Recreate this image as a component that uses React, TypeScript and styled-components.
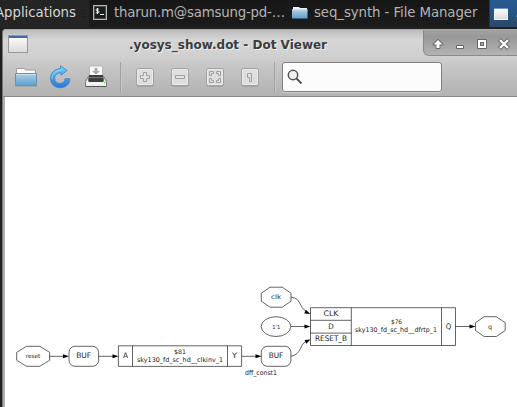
import React from "react";
import styled, { createGlobalStyle } from "styled-components";

const Global = createGlobalStyle`
  * { box-sizing: border-box; }
  body { margin: 0; overflow: hidden; background: #1b1b1b; font-family: "DejaVu Sans", sans-serif; }
`;

const Desktop = styled.div`
  width: 517px;
  height: 407px;
  display: flex;
  flex-direction: column;
  overflow: hidden;
  background: #202020;
`;

const Taskbar = styled.header`
  height: 28px;
  flex: none;
  display: flex;
  background: #242424;
  color: #b4b4b4;
  font-size: 13.33px;
  line-height: 25px;
  white-space: nowrap;
`;

const AppsMenu = styled.div`
  width: 89px;
  flex: none;
  display: flex;
  justify-content: space-between;
  color: #d6d6d6;
  svg { flex: none; margin-right: 3px; }
`;

const AppsLabel = styled.span`
  margin-left: -5px;
  letter-spacing: -0.04px;
`;

const Task = styled.div<{ $width: number; $active?: boolean }>`
  width: ${(p) => p.$width}px;
  height: 27px;
  flex: none;
  display: flex;
  overflow: hidden;
  border-left: 1px solid ${(p) => (p.$active ? "#123963" : "#1c1c1c")};
  background: ${(p) => (p.$active ? "linear-gradient(#28598f, #275587 50%, #2c4665)" : "linear-gradient(#161616, #1c1c1c)")};
  svg { flex: none; }
`;

const TaskFrame = styled.span`
  display: flex;
  margin-left: 1px;
`;

const ActiveIcon = styled.span`
  display: flex;
  align-items: flex-start;
  padding-top: 8px;
  margin-left: 4px;
`;

const TaskText = styled.span<{ $gap: number; $spacing?: number }>`
  margin-left: ${(p) => p.$gap}px;
  letter-spacing: ${(p) => p.$spacing ?? 0}px;
`;

const Window = styled.main`
  flex: 1;
  margin-left: 2px;
  margin-top: 1px;
  border-left: 1px solid #777;
  border-radius: 4px 0 0 0;
  display: flex;
  flex-direction: column;
  overflow: hidden;
  background: #b5b5b5;
`;

const Chrome = styled.div`
  height: 68px;
  flex: none;
  border-top: 1px solid #ababab;
  border-bottom: 1px solid #868686;
  background: linear-gradient(#bcbcbc, #d6d6d6 10px, #d0d0d0 26px, #c8c8c8 34px, #b2b2b2);
`;

const TitleBar = styled.div`
  height: 27px;
  display: flex;
`;

const WindowIconSlot = styled.div`
  width: 126px;
  flex: none;
  padding: 5px 0 0 5px;
  svg { display: block; }
`;

const Title = styled.h1`
  margin: 0;
  width: 294px;
  flex: none;
  font-size: 12px;
  line-height: 30px;
  font-weight: bold;
  color: #3c3c3c;
  text-shadow: 1px 1px 0 #eeeeee;
  white-space: nowrap;
`;

const Controls = styled.div`
  width: 94px;
  height: 26px;
  flex: none;
  border-left: 1px solid #888;
  border-bottom: 1px solid #8b8b8b;
  border-bottom-left-radius: 6px;
  background: linear-gradient(#a2a2a2, #989898 7px, #b4b4b4);
  svg { display: block; }
`;

const Toolbar = styled.div`
  display: flex;
  padding: 5px 0 0 11px;
`;

const ToolGroup = styled.div<{ $gap: number; $left?: number }>`
  display: flex;
  align-items: center;
  height: 30px;
  gap: ${(p) => p.$gap}px;
  margin-left: ${(p) => p.$left ?? 0}px;
  svg { display: block; }
`;

const Divider = styled.i<{ $left: number }>`
  width: 1px;
  height: 30px;
  margin-left: ${(p) => p.$left}px;
  background: #a0a0a0;
  box-shadow: 1px 0 #c8c8c8;
`;

const Search = styled.div`
  width: 160px;
  height: 30px;
  margin-left: 7px;
  border: 1px solid #808080;
  border-radius: 3px;
  background: #fcfcfc;
  box-shadow: 0 1px #cacaca;
  svg { display: block; }
`;

const Canvas = styled.section`
  flex: 1;
  border-left: 2px solid #b0b0b0;
  background: #fff;
  svg { display: block; }
`;

const Folder = () => (
  <svg width="24" height="24" viewBox="0 0 24 24">
    <defs>
      <linearGradient id="folderFront" x2="0" y2="1">
        <stop stopColor="#acd0e6" />
        <stop offset="1" stopColor="#5f9fcb" />
      </linearGradient>
    </defs>
    <path d="M2.500 5V3.500h7.800L11.500 5h10v5h-19z" fill="#fafafa" stroke="#a0a0a0" />
    <path d="M1.500 8.500h21v12h-21z" fill="url(#folderFront)" stroke="#6893af" />
    <path d="M2 9.500h20" stroke="#c7e0ee" />
    <path d="M1 21.500h22" stroke="#999" opacity=".6" />
  </svg>
);

const TaskFolder = () => (
  <svg width="18" height="25" viewBox="0 0 18 25">
    <path d="M2 8V7h6l1 1h7v4H2z" fill="#eef1f3" />
    <path d="M1 9.500h15.500v9H1z" fill="url(#folderFront)" />
    <path d="M1 10h15.500" stroke="#c3dfef" />
  </svg>
);

const TerminalIcon = () => (
  <svg width="18" height="25" viewBox="-1 0 18 25">
    <rect x="1.500" y="5.500" width="13" height="14" fill="#171d1d" stroke="#b5b8b5" />
    <rect x="2.500" y="6.500" width="11" height="12" fill="none" stroke="#474b4b" />
    <path d="M6.800 9H5q-1 0-1 .9t1 .9h1q1 0 1 1t-1 1H3.800M5.500 8v6" fill="none" stroke="#eee" />
    <path d="M8 14.500h4" stroke="#fff" />
  </svg>
);

const WindowIcon = ({ width, height }: { width: number; height: number }) => (
  <svg width={width} height={height} viewBox="0 0 20 18" preserveAspectRatio="none">
    <defs>
      <linearGradient id="windowPage" x2="0" y2="1">
        <stop stopColor="#fff" />
        <stop offset="1" stopColor="#d9dbd6" />
      </linearGradient>
    </defs>
    <rect x=".5" y=".5" width="19" height="17" fill="url(#windowPage)" stroke="#95979a" />
    <path d="M1 2h18" stroke="#4269a6" strokeWidth="2" />
  </svg>
);

const ActiveWindowIcon = () => (
  <svg width="14" height="12" viewBox="0 0 14 12">
    <rect x=".5" y=".5" width="13" height="11" fill="url(#windowPage)" stroke="#f2f2f0" />
    <path d="M0 .5h14" stroke="#6b93cd" />
  </svg>
);

const RefreshIcon = () => (
  <svg width="24" height="24" viewBox="0 0 24 24">
    <defs>
      <linearGradient id="refreshBlue" x2="0" y2="1">
        <stop stopColor="#75d3fa" />
        <stop offset="1" stopColor="#2874d6" />
      </linearGradient>
    </defs>
    <path
      d="M11.500 .8l6.500 4.700-6 4.700V7.700c-4.400.3-6.300 2.900-6.300 5.800 0 3 2.400 5 5.300 5 3 0 5-2 5-4.800h4.800c.2 5.200-4 9-9.600 9C5.700 22.700 1.500 19 1.500 13.500c0-5.400 4-9.400 10-10z"
      fill="url(#refreshBlue)" stroke="#3482ca" strokeWidth=".8"
    />
    <path d="M3 14c0-5 3-8.500 9.500-9" fill="none" stroke="#9de4ff" opacity=".7" />
  </svg>
);

const PrinterIcon = () => (
  <svg width="24" height="24" viewBox="0 0 24 24">
    <path d="M5 10.500h14l3.500 6v5h-21v-5z" fill="#ededed" stroke="#777" />
    <rect x="5.500" y="1" width="13" height="11" fill="#f8f8f8" stroke="#b8b8b8" />
    <path d="M10.500 3h3v3h2.500l-4 3.800L8 6h2.500z" fill="#aaa" />
    <path d="M5 10h14v2.500h.7V16q0 1-1 1H5.300q-1 0-1-1v-3.500H5z" fill="#3d3f3d" />
    <path d="M5 12.500h14" stroke="#777" />
    <path d="M2 18.500h20" stroke="#fff" />
    <path d="M2 21.500h20" stroke="#555" />
    <path d="M20 17.500h1.500" stroke="#62e044" strokeWidth="1.500" />
  </svg>
);

const toolGlyphs = {
  plus: "M7.500 4.500h3v3h3v3h-3v3h-3v-3h-3v-3h3z",
  minus: "M4.500 7.500h9v3h-9z",
  fit: "M3.500 3.500h4v2h-2v2h-2zM10.500 3.500h4v4h-2v-2h-2zM3.500 10.500h2v2h2v2h-4zM12.500 10.500h2v4h-4v-2h2z",
  one: "M6.500 5.500h4v8h-2v-4h-2z",
};

const ToolIcon = ({ glyph }: { glyph: keyof typeof toolGlyphs }) => (
  <svg width="18" height="30" viewBox="0 -6 18 30">
    <rect x=".5" y="1.500" width="17" height="17" rx="2" fill="none" stroke="#777" opacity=".35" />
    <rect x=".5" y=".5" width="17" height="17" rx="2" fill="#dedede" stroke="#a0a0a0" />
    <rect x="1.500" y="1.500" width="15" height="15" rx="1" fill="none" stroke="#ececec" />
    <path d={toolGlyphs[glyph]} fill="#e2e2e2" stroke="#a0a0a0" />
  </svg>
);

const SearchIcon = () => (
  <svg width="26" height="28" viewBox="0 0 26 28">
    <circle cx="10" cy="12" r="4.700" fill="#f2f2f2" stroke="#555" strokeWidth="1.500" />
    <path d="M13.500 15.500l5 5" stroke="#555" strokeWidth="2" />
  </svg>
);

const ControlIcons = () => (
  <svg width="93" height="25" viewBox="0 0 93 25">
    <g fill="#fff" stroke="#686868" strokeLinejoin="round" paintOrder="stroke">
      <path d="M14 10l4.500 4.500H15.500V18h-3v-3.500H9.500z" strokeWidth="1.800" />
      <path d="M33 16h6v2h-6z" strokeWidth="2" />
      <path d="M54 10h8v8h-8zM56 12v4h4v-4z" fillRule="evenodd" strokeWidth="2" />
    </g>
    <path d="M75.500 9.500l9 9M84.500 9.500l-9 9" stroke="#686868" strokeWidth="4.200" />
    <path d="M76 10l8 8M84 10l-8 8" stroke="#fff" strokeWidth="2.200" />
  </svg>
);

type LabelProps = { x: number; y: number; width: number; size?: number; children: string };
const Label = ({ x, y, width, size = 7.6, children }: LabelProps) => (
  <text x={x} y={y} fontSize={size} textAnchor="middle" textLength={width} lengthAdjust="spacingAndGlyphs">
    {children}
  </text>
);

const wires = [
  "M49.500 356.300H64",
  "M98.500 356.300H113",
  "M242 356.300H256",
  "M291 326.500H305",
  "M455.500 326.500H470",
  "M291 297.200C301 298 299 307 306 311.300",
  "M291 356.300C302 354 299 345 306 341.500",
];

const arrows = [
  "M69 356.300l-6-2v4z",
  "M118.500 356.300l-6-2v4z",
  "M261.500 356.300l-6-2v4z",
  "M310.500 326.500l-6-2v4z",
  "M475.500 326.500l-6-2v4z",
  "M310.500 314l-6.200-.6 1.500-3.700z",
  "M310.500 339.500l-4.200 4.200-1.800-3.700z",
];

const Circuit = () => (
  <svg width="512" height="310" viewBox="5 97 512 310" fontFamily="DejaVu Sans, sans-serif" fill="#222">
    <g fill="none" stroke="#303030" strokeWidth=".75">
      <path d="M26.500 346.300h13.300l9.800 6v8l-9.800 6H26.500l-9.800-6v-8z" />
      <rect x="69" y="346.300" width="29.600" height="20" rx="6" />
      <path d="M118.400 345.800h123.200v20.600H118.400zM132.500 345.800v20.600M227.500 345.800v20.600" />
      <path d="M270 287.200h12.200l8.800 6v8l-8.800 6H270l-8.700-6v-8z" />
      <ellipse cx="276" cy="326.600" rx="14.800" ry="9.900" />
      <rect x="261.300" y="346.300" width="29.600" height="20" rx="6" />
      <path d="M310.500 307.700h145v37.800h-145zM351.300 307.700v37.800M441.500 307.700v37.800M310.500 320.300h40.800M310.500 333.100h40.800" />
      <path d="M484.200 316.700h12.100l8.900 6v7.800l-8.900 6h-12.100l-8.700-6v-7.800z" />
      {wires.map((d) => <path key={d} d={d} />)}
    </g>
    {arrows.map((d) => <path key={d} d={d} fill="#000" />)}
    <Label x={33} y={358} width={14.500} size={5.800}>reset</Label>
    <Label x={83.700} y={358.300} width={15}>BUF</Label>
    <Label x={125.500} y={358.300} width={5}>A</Label>
    <Label x={180} y={354.200} width={12} size={6.200}>$81</Label>
    <Label x={180} y={362} width={86} size={6.500}>sky130_fd_sc_hd__clkinv_1</Label>
    <Label x={234.500} y={358.300} width={5}>Y</Label>
    <Label x={276} y={299} width={10} size={6.300}>clk</Label>
    <Label x={276.200} y={328.500} width={8} size={5.500}>1'1</Label>
    <Label x={276} y={358.300} width={14.500}>BUF</Label>
    <Label x={261} y={375} width={32} size={6.500}>dff_const1</Label>
    <Label x={331} y={316} width={15}>CLK</Label>
    <Label x={331} y={328.500} width={5.500}>D</Label>
    <Label x={331} y={341.300} width={32}>RESET_B</Label>
    <Label x={396.500} y={324.200} width={11} size={6.200}>$76</Label>
    <Label x={396} y={332} width={82} size={6.500}>sky130_fd_sc_hd__dfrtp_1</Label>
    <Label x={448.500} y={328.500} width={5.500}>Q</Label>
    <Label x={490} y={328.500} width={4} size={6.200}>q</Label>
  </svg>
);

const GripIcon = () => (
  <svg width="5" height="25" viewBox="0 0 5 25">
    <path d="M0 10.500h4M0 13.500h4M0 16.500h4" stroke="#1c1c1c" />
  </svg>
);

export default function App() {
  return (
    <>
      <Global />
      <Desktop>
        <Taskbar>
          <AppsMenu><AppsLabel>Applications</AppsLabel><GripIcon /></AppsMenu>
          <Task $width={200}>
            <TaskFrame><TerminalIcon /></TaskFrame>
            <TaskText $gap={5} $spacing={-0.2}>tharun.m@samsung-pd-…</TaskText>
          </Task>
          <Task $width={200}>
            <TaskFrame><TaskFolder /></TaskFrame>
            <TaskText $gap={5} $spacing={-0.09}>seq_synth - File Manager</TaskText>
          </Task>
          <Task $width={28} $active>
            <ActiveIcon><ActiveWindowIcon /></ActiveIcon>
            <TaskText $gap={7}>.yosys_show.dot</TaskText>
          </Task>
        </Taskbar>
        <Window>
          <Chrome>
            <TitleBar>
              <WindowIconSlot><WindowIcon width={20} height={18} /></WindowIconSlot>
              <Title>.yosys_show.dot - Dot Viewer</Title>
              <Controls><ControlIcons /></Controls>
            </TitleBar>
            <Toolbar>
              <ToolGroup $gap={11}><Folder /><RefreshIcon /><PrinterIcon /></ToolGroup>
              <Divider $left={12} />
              <ToolGroup $gap={17} $left={15}>
                <ToolIcon glyph="plus" />
                <ToolIcon glyph="minus" />
                <ToolIcon glyph="fit" />
                <ToolIcon glyph="one" />
              </ToolGroup>
              <Divider $left={15} />
              <Search><SearchIcon /></Search>
            </Toolbar>
          </Chrome>
          <Canvas><Circuit /></Canvas>
        </Window>
      </Desktop>
    </>
  );
}
